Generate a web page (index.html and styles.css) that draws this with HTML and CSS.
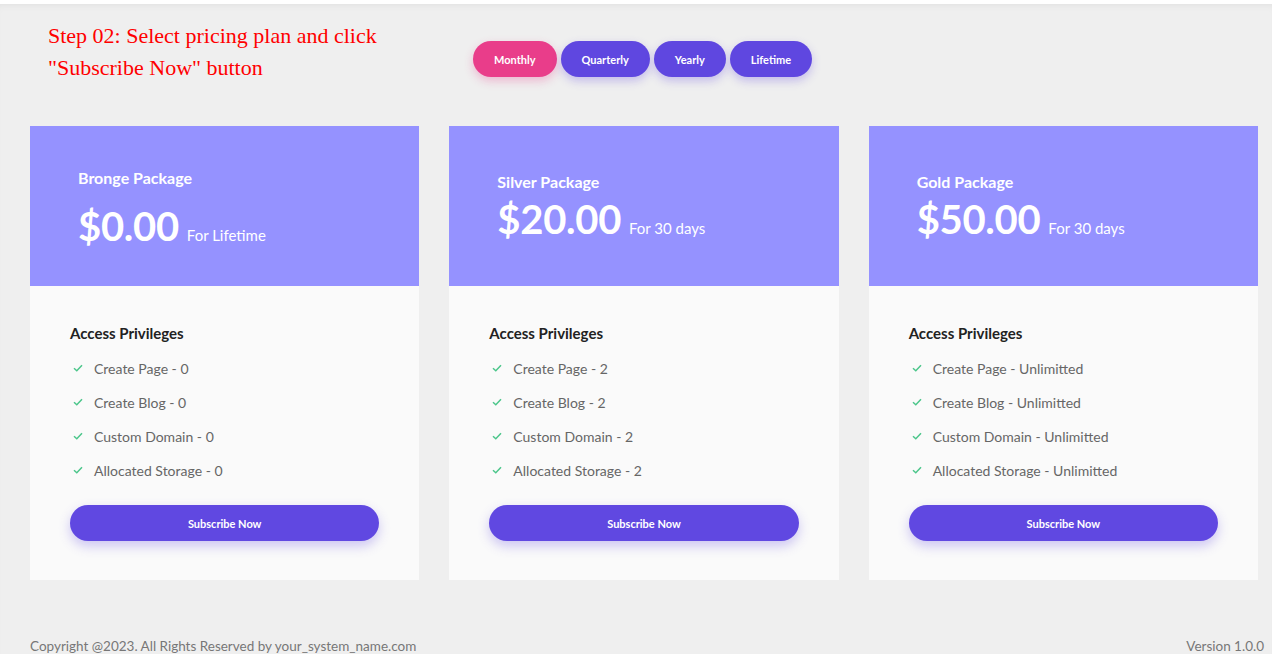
FILE: index.html
```html
<!DOCTYPE html>
<html lang="en">
<head>
<meta charset="utf-8">
<title>Pricing</title>
<link rel="stylesheet" href="styles.css">
</head>
<body>
<div class="page">
  <div class="top">
    <p class="step">Step 02: Select pricing plan and click<br>"Subscribe Now" button</p>
    <div class="toggle">
      <button class="pill pill-active">Monthly</button>
      <button class="pill">Quarterly</button>
      <button class="pill">Yearly</button>
      <button class="pill">Lifetime</button>
    </div>
  </div>

  <div class="cards">
    <div class="card">
      <div class="card-head card-head-bronze">
        <div class="plan-name">Bronge Package</div>
        <div class="price"><span class="amount">$0.00</span><span class="period">For Lifetime</span></div>
      </div>
      <div class="card-body">
        <div class="priv-title">Access Privileges</div>
        <ul class="features">
          <li><svg class="check" viewBox="0 0 10 8"><path d="M1 4.2 L3.8 6.8 L9 1.2" fill="none" stroke="#4cc68b" stroke-width="1.5"/></svg>Create Page - 0</li>
          <li><svg class="check" viewBox="0 0 10 8"><path d="M1 4.2 L3.8 6.8 L9 1.2" fill="none" stroke="#4cc68b" stroke-width="1.5"/></svg>Create Blog - 0</li>
          <li><svg class="check" viewBox="0 0 10 8"><path d="M1 4.2 L3.8 6.8 L9 1.2" fill="none" stroke="#4cc68b" stroke-width="1.5"/></svg>Custom Domain - 0</li>
          <li><svg class="check" viewBox="0 0 10 8"><path d="M1 4.2 L3.8 6.8 L9 1.2" fill="none" stroke="#4cc68b" stroke-width="1.5"/></svg>Allocated Storage - 0</li>
        </ul>
        <button class="subscribe">Subscribe Now</button>
      </div>
    </div>

    <div class="card">
      <div class="card-head">
        <div class="plan-name">Silver Package</div>
        <div class="price"><span class="amount">$20.00</span><span class="period">For 30 days</span></div>
      </div>
      <div class="card-body">
        <div class="priv-title">Access Privileges</div>
        <ul class="features">
          <li><svg class="check" viewBox="0 0 10 8"><path d="M1 4.2 L3.8 6.8 L9 1.2" fill="none" stroke="#4cc68b" stroke-width="1.5"/></svg>Create Page - 2</li>
          <li><svg class="check" viewBox="0 0 10 8"><path d="M1 4.2 L3.8 6.8 L9 1.2" fill="none" stroke="#4cc68b" stroke-width="1.5"/></svg>Create Blog - 2</li>
          <li><svg class="check" viewBox="0 0 10 8"><path d="M1 4.2 L3.8 6.8 L9 1.2" fill="none" stroke="#4cc68b" stroke-width="1.5"/></svg>Custom Domain - 2</li>
          <li><svg class="check" viewBox="0 0 10 8"><path d="M1 4.2 L3.8 6.8 L9 1.2" fill="none" stroke="#4cc68b" stroke-width="1.5"/></svg>Allocated Storage - 2</li>
        </ul>
        <button class="subscribe">Subscribe Now</button>
      </div>
    </div>

    <div class="card">
      <div class="card-head">
        <div class="plan-name">Gold Package</div>
        <div class="price"><span class="amount">$50.00</span><span class="period">For 30 days</span></div>
      </div>
      <div class="card-body">
        <div class="priv-title">Access Privileges</div>
        <ul class="features">
          <li><svg class="check" viewBox="0 0 10 8"><path d="M1 4.2 L3.8 6.8 L9 1.2" fill="none" stroke="#4cc68b" stroke-width="1.5"/></svg>Create Page - Unlimitted</li>
          <li><svg class="check" viewBox="0 0 10 8"><path d="M1 4.2 L3.8 6.8 L9 1.2" fill="none" stroke="#4cc68b" stroke-width="1.5"/></svg>Create Blog - Unlimitted</li>
          <li><svg class="check" viewBox="0 0 10 8"><path d="M1 4.2 L3.8 6.8 L9 1.2" fill="none" stroke="#4cc68b" stroke-width="1.5"/></svg>Custom Domain - Unlimitted</li>
          <li><svg class="check" viewBox="0 0 10 8"><path d="M1 4.2 L3.8 6.8 L9 1.2" fill="none" stroke="#4cc68b" stroke-width="1.5"/></svg>Allocated Storage - Unlimitted</li>
        </ul>
        <button class="subscribe">Subscribe Now</button>
      </div>
    </div>
  </div>

  <div class="footer">
    <span>Copyright @2023. All Rights Reserved by your_system_name.com</span>
    <span>Version 1.0.0</span>
  </div>
</div>
</body>
</html>
```

FILE: styles.css
```css
html, body {
  margin: 0;
  padding: 0;
  background: #ffffff;
}

body {
  font-family: Lato, "Noto Sans", sans-serif;
}

.page {
  margin-top: 4px;
  height: 650px;
  overflow: hidden;
  background: #efefef;
  box-shadow: inset 0 6px 8px -6px rgba(0, 0, 0, 0.08);
  padding: 0 14px 0 30px;
  box-sizing: border-box;
  display: flex;
  flex-direction: column;
}

.top {
  display: flex;
  align-items: flex-start;
  height: 122px;
  padding: 16px 0 0 18px;
  box-sizing: border-box;
}

.step {
  margin: 0;
  width: 425px;
  font-family: "Liberation Serif", serif;
  font-size: 22px;
  line-height: 32px;
  color: #ff0000;
}

.toggle {
  display: flex;
  gap: 4px;
  margin-top: 21px;
}

.pill {
  height: 36px;
  padding: 0 21px;
  border: none;
  border-radius: 18px;
  background: #5f47e0;
  color: #ffffff;
  font-family: Lato, sans-serif;
  font-weight: 700;
  font-size: 11px;
  box-shadow: 0 4px 10px rgba(95, 71, 224, 0.3);
}

.pill-active {
  background: #e93d8a;
  box-shadow: 0 4px 10px rgba(233, 61, 138, 0.3);
}

.cards {
  display: grid;
  grid-template-columns: repeat(3, 1fr);
  gap: 30px;
}

.card {
  background: #fafafa;
}

.card-head {
  height: 160px;
  box-sizing: border-box;
  background: #9592ff;
  color: #ffffff;
  padding: 44px 48px 0;
}

.card-head-bronze {
  padding-top: 40px;
}

.plan-name {
  font-size: 16px;
  font-weight: 700;
  line-height: 24px;
}

.price {
  display: flex;
  align-items: baseline;
  line-height: 50px;
}

.card-head-bronze .price {
  line-height: 72px;
}

.amount {
  font-size: 40px;
  font-weight: 700;
  letter-spacing: -0.3px;
  margin-right: 8px;
}

.period {
  font-size: 15px;
}

.card-body {
  padding: 37px 40px 39px;
}

.priv-title {
  font-size: 15px;
  font-weight: 700;
  color: #222222;
  line-height: 20px;
}

.features {
  list-style: none;
  margin: 8px 0 0;
  padding: 0;
}

.features li {
  display: flex;
  align-items: center;
  height: 34px;
  font-size: 14px;
  color: #666666;
}

.check {
  width: 10px;
  height: 8px;
  margin: 0 11px 0 3px;
}

.subscribe {
  display: block;
  width: 100%;
  height: 36px;
  margin-top: 18px;
  border: none;
  border-radius: 18px;
  background: #6048e1;
  color: #ffffff;
  font-family: Lato, sans-serif;
  font-weight: 700;
  font-size: 11px;
  box-shadow: 0 5px 12px rgba(96, 72, 225, 0.3);
}

.footer {
  margin-top: auto;
  margin-right: -6px;
  display: flex;
  justify-content: space-between;
  font-size: 13.5px;
  color: #777777;
  line-height: 18px;
  margin-bottom: -1px;
}
```
